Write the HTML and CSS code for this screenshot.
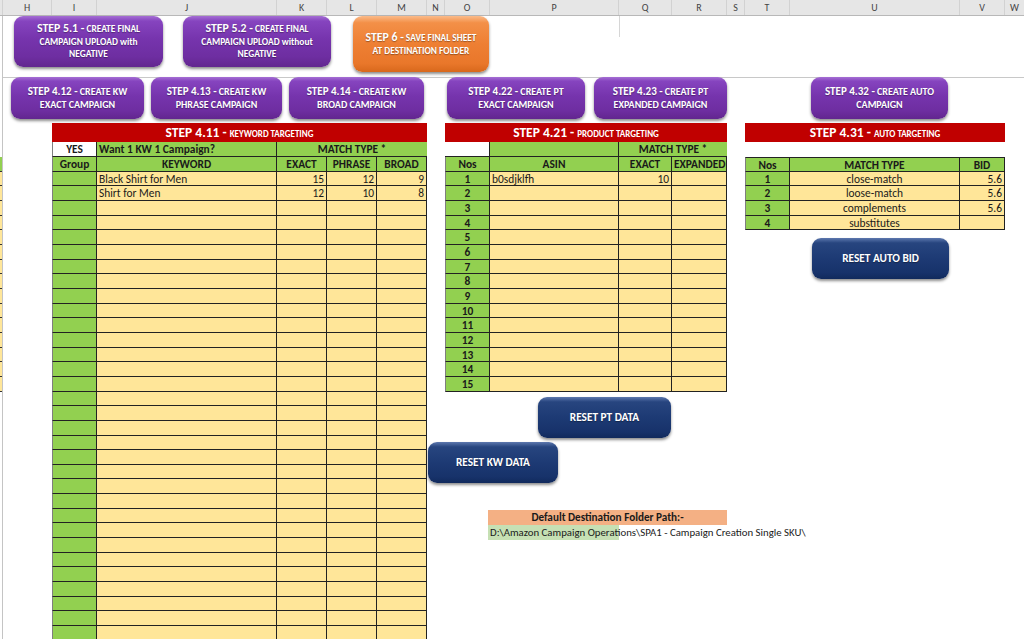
FILE: index.html
```html
<!DOCTYPE html>
<html>
<head>
<meta charset="utf-8">
<link rel="stylesheet" href="styles.css">
</head>
<body>
<div class="colhead">
  <div class="h cG"></div><div class="h cH">H</div><div class="h cI">I</div><div class="h cJ">J</div><div class="h cK">K</div><div class="h cL">L</div><div class="h cM">M</div><div class="h cN">N</div><div class="h cO">O</div><div class="h cP">P</div><div class="h cQ">Q</div><div class="h cR">R</div><div class="h cS">S</div><div class="h cT">T</div><div class="h cU">U</div><div class="h cV">V</div><div class="h cW">W</div>
</div>
<div class="sheet">
  <div class="gutter">
    <div class="gsp"></div>
    <div class="gc g"></div>
    <div class="gc y"></div><div class="gc y"></div><div class="gc y"></div><div class="gc y"></div><div class="gc y"></div>
    <div class="gc y"></div><div class="gc y"></div><div class="gc y"></div><div class="gc y"></div><div class="gc y"></div>
    <div class="gc y"></div><div class="gc y"></div><div class="gc y"></div><div class="gc y"></div><div class="gc y"></div>
  </div>
  <div class="main">
    <div class="row1">
      <div class="btn purple b51"><div><span class="big">STEP 5.1 -</span> CREATE FINAL<br>CAMPAIGN UPLOAD with<br>NEGATIVE</div></div>
      <div class="btn purple b52"><div><span class="big">STEP 5.2 -</span> CREATE FINAL<br>CAMPAIGN UPLOAD without<br>NEGATIVE</div></div>
      <div class="btn orange b6"><div><span class="big">STEP 6 -</span> SAVE FINAL SHEET<br>AT DESTINATION FOLDER</div></div>
      <div class="gridseg"></div>
    </div>
    <div class="pane-line"></div>
    <div class="row2">
      <div class="btn purple s b412"><div><span class="mid-big">STEP 4.12 -</span> CREATE KW<br>EXACT CAMPAIGN</div></div>
      <div class="btn purple s b413"><div><span class="mid-big">STEP 4.13 -</span> CREATE KW<br>PHRASE CAMPAIGN</div></div>
      <div class="btn purple s b414"><div><span class="mid-big">STEP 4.14 -</span> CREATE KW<br>BROAD CAMPAIGN</div></div>
      <div class="btn purple s b422"><div><span class="mid-big">STEP 4.22 -</span> CREATE PT<br>EXACT CAMPAIGN</div></div>
      <div class="btn purple s b423"><div><span class="mid-big">STEP 4.23 -</span> CREATE PT<br>EXPANDED CAMPAIGN</div></div>
      <div class="btn purple s b432"><div><span class="mid-big">STEP 4.32 -</span> CREATE AUTO<br>CAMPAIGN</div></div>
    </div>
    <div class="tables">
      <div class="tbl kw">
        <div class="title">STEP 4.11 - <small>KEYWORD TARGETING</small></div>
        <div class="c w b ctr first">YES</div><div class="c g b">Want 1 KW 1 Campaign?</div><div class="c g b ctr span3 nr">MATCH TYPE *</div>
        <div class="c g b ctr first">Group</div><div class="c g b ctr">KEYWORD</div><div class="c g b ctr">EXACT</div><div class="c g b ctr">PHRASE</div><div class="c g b ctr">BROAD</div>
        <div class="c g first"></div><div class="c y">Black Shirt for Men</div><div class="c y r">15</div><div class="c y r">12</div><div class="c y r">9</div>
        <div class="c g first"></div><div class="c y">Shirt for Men</div><div class="c y r">12</div><div class="c y r">10</div><div class="c y r">8</div>
        <div class="c g first"></div><div class="c y"></div><div class="c y"></div><div class="c y"></div><div class="c y"></div>
        <div class="c g first"></div><div class="c y"></div><div class="c y"></div><div class="c y"></div><div class="c y"></div>
        <div class="c g first"></div><div class="c y"></div><div class="c y"></div><div class="c y"></div><div class="c y"></div>
        <div class="c g first"></div><div class="c y"></div><div class="c y"></div><div class="c y"></div><div class="c y"></div>
        <div class="c g first"></div><div class="c y"></div><div class="c y"></div><div class="c y"></div><div class="c y"></div>
        <div class="c g first"></div><div class="c y"></div><div class="c y"></div><div class="c y"></div><div class="c y"></div>
        <div class="c g first"></div><div class="c y"></div><div class="c y"></div><div class="c y"></div><div class="c y"></div>
        <div class="c g first"></div><div class="c y"></div><div class="c y"></div><div class="c y"></div><div class="c y"></div>
        <div class="c g first"></div><div class="c y"></div><div class="c y"></div><div class="c y"></div><div class="c y"></div>
        <div class="c g first"></div><div class="c y"></div><div class="c y"></div><div class="c y"></div><div class="c y"></div>
        <div class="c g first"></div><div class="c y"></div><div class="c y"></div><div class="c y"></div><div class="c y"></div>
        <div class="c g first"></div><div class="c y"></div><div class="c y"></div><div class="c y"></div><div class="c y"></div>
        <div class="c g first"></div><div class="c y"></div><div class="c y"></div><div class="c y"></div><div class="c y"></div>
        <div class="c g first"></div><div class="c y"></div><div class="c y"></div><div class="c y"></div><div class="c y"></div>
        <div class="c g first"></div><div class="c y"></div><div class="c y"></div><div class="c y"></div><div class="c y"></div>
        <div class="c g first"></div><div class="c y"></div><div class="c y"></div><div class="c y"></div><div class="c y"></div>
        <div class="c g first"></div><div class="c y"></div><div class="c y"></div><div class="c y"></div><div class="c y"></div>
        <div class="c g first"></div><div class="c y"></div><div class="c y"></div><div class="c y"></div><div class="c y"></div>
        <div class="c g first"></div><div class="c y"></div><div class="c y"></div><div class="c y"></div><div class="c y"></div>
        <div class="c g first"></div><div class="c y"></div><div class="c y"></div><div class="c y"></div><div class="c y"></div>
        <div class="c g first"></div><div class="c y"></div><div class="c y"></div><div class="c y"></div><div class="c y"></div>
        <div class="c g first"></div><div class="c y"></div><div class="c y"></div><div class="c y"></div><div class="c y"></div>
        <div class="c g first"></div><div class="c y"></div><div class="c y"></div><div class="c y"></div><div class="c y"></div>
        <div class="c g first"></div><div class="c y"></div><div class="c y"></div><div class="c y"></div><div class="c y"></div>
        <div class="c g first"></div><div class="c y"></div><div class="c y"></div><div class="c y"></div><div class="c y"></div>
        <div class="c g first"></div><div class="c y"></div><div class="c y"></div><div class="c y"></div><div class="c y"></div>
        <div class="c g first"></div><div class="c y"></div><div class="c y"></div><div class="c y"></div><div class="c y"></div>
        <div class="c g first"></div><div class="c y"></div><div class="c y"></div><div class="c y"></div><div class="c y"></div>
        <div class="c g first"></div><div class="c y"></div><div class="c y"></div><div class="c y"></div><div class="c y"></div>
        <div class="c g first"></div><div class="c y"></div><div class="c y"></div><div class="c y"></div><div class="c y"></div>
        <div class="c g first"></div><div class="c y"></div><div class="c y"></div><div class="c y"></div><div class="c y"></div>
      </div>
      <div class="midcol">
        <div class="tbl pt">
          <div class="title">STEP 4.21 - <small>PRODUCT TARGETING</small></div>
          <div class="c blank"></div><div class="c g"></div><div class="c g b ctr span2 nr">MATCH TYPE *</div>
          <div class="c g b ctr first">Nos</div><div class="c g b ctr">ASIN</div><div class="c g b ctr">EXACT</div><div class="c g b ctr">EXPANDED</div>
          <div class="c g b ctr first">1</div><div class="c y">b0sdjklfh</div><div class="c y r">10</div><div class="c y"></div>
          <div class="c g b ctr first">2</div><div class="c y"></div><div class="c y"></div><div class="c y"></div>
          <div class="c g b ctr first">3</div><div class="c y"></div><div class="c y"></div><div class="c y"></div>
          <div class="c g b ctr first">4</div><div class="c y"></div><div class="c y"></div><div class="c y"></div>
          <div class="c g b ctr first">5</div><div class="c y"></div><div class="c y"></div><div class="c y"></div>
          <div class="c g b ctr first">6</div><div class="c y"></div><div class="c y"></div><div class="c y"></div>
          <div class="c g b ctr first">7</div><div class="c y"></div><div class="c y"></div><div class="c y"></div>
          <div class="c g b ctr first">8</div><div class="c y"></div><div class="c y"></div><div class="c y"></div>
          <div class="c g b ctr first">9</div><div class="c y"></div><div class="c y"></div><div class="c y"></div>
          <div class="c g b ctr first">10</div><div class="c y"></div><div class="c y"></div><div class="c y"></div>
          <div class="c g b ctr first">11</div><div class="c y"></div><div class="c y"></div><div class="c y"></div>
          <div class="c g b ctr first">12</div><div class="c y"></div><div class="c y"></div><div class="c y"></div>
          <div class="c g b ctr first">13</div><div class="c y"></div><div class="c y"></div><div class="c y"></div>
          <div class="c g b ctr first">14</div><div class="c y"></div><div class="c y"></div><div class="c y"></div>
          <div class="c g b ctr first">15</div><div class="c y"></div><div class="c y"></div><div class="c y"></div>
        </div>
        <div class="btn navy rpt">RESET PT DATA</div>
        <div class="btn navy rkw">RESET KW DATA</div>
        <div class="pathhead">Default Destination Folder Path:-</div>
        <div class="pathval">D:\Amazon Campaign Operations\SPA1 - Campaign Creation Single SKU\</div>
      </div>
      <div class="rightcol">
        <div class="tbl auto">
          <div class="title">STEP 4.31 - <small>AUTO TARGETING</small></div>
          <div class="blankrow"></div>
          <div class="c g b ctr first top">Nos</div><div class="c g b ctr top">MATCH TYPE</div><div class="c g b ctr top">BID</div>
          <div class="c g b ctr first">1</div><div class="c y ctr">close-match</div><div class="c y r">5.6</div>
          <div class="c g b ctr first">2</div><div class="c y ctr">loose-match</div><div class="c y r">5.6</div>
          <div class="c g b ctr first">3</div><div class="c y ctr">complements</div><div class="c y r">5.6</div>
          <div class="c g b ctr first">4</div><div class="c y ctr">substitutes</div><div class="c y r"></div>
        </div>
        <div class="btn navy rauto">RESET AUTO BID</div>
      </div>
    </div>
  </div>
</div>
</body>
</html>
```

FILE: styles.css
```css
* { box-sizing: border-box; }
html, body { margin: 0; padding: 0; }
body {
  width: 1024px;
  height: 639px;
  overflow: hidden;
  background: #ffffff;
  font-family: Carlito, Lato, "Open Sans", sans-serif;
  color: #1a1a1a;
}

/* column header */
.colhead {
  display: flex;
  height: 16px;
  background: #e6e6e6;
  border-bottom: 1px solid #b8b8b8;
}
.colhead .h {
  flex: none;
  height: 15px;
  border-right: 1px solid #d2d2d2;
  font-size: 10px;
  line-height: 15px;
  color: #444444;
  text-align: center;
}
.cG { width: 3px; }
.cH { width: 49px; }
.cI { width: 45px; }
.cJ { width: 180px; }
.cK { width: 50px; }
.cL { width: 50px; }
.cM { width: 50px; }
.cN { width: 18px; }
.cO { width: 45px; }
.cP { width: 129px; }
.cQ { width: 53px; }
.cR { width: 55px; }
.cS { width: 18px; }
.cT { width: 45px; }
.cU { width: 170px; }
.cV { width: 45px; }
.cW { width: 19px; border-right: none !important; }

.sheet {
  display: flex;
  height: 623px;
}

/* cut-off column G at the far left */
.gutter {
  flex: none;
  width: 3px;
  border-right: 1px solid #c4c4c4;
  display: flex;
  flex-direction: column;
}
.gsp { height: 140.7px; flex: none; }
.gc {
  flex: none;
  height: 14.667px;
  border-bottom: 1px solid #333;
}
.gutter .gc.g { height: 15px; }

.main {
  flex: 1;
  display: flex;
  flex-direction: column;
  min-width: 0;
}

/* buttons */
.btn {
  flex: none;
  display: flex;
  align-items: center;
  justify-content: center;
  text-align: center;
  color: #ffffff;
  font-weight: 700;
  font-size: 9.4px;
  line-height: 12.5px;
  border-radius: 9px;
  box-shadow: 0 2px 3px rgba(0, 0, 0, 0.45);
  text-shadow: 0 1px 1px rgba(0, 0, 0, 0.35);
  white-space: nowrap;
}
.btn .big { font-size: 11.8px; }
.btn .mid-big { font-size: 11px; }
.btn.s { font-size: 10px; line-height: 13px; }
.purple {
  background: linear-gradient(to bottom, #a56fd4 0%, #8644bf 10%, #7634ad 45%, #6e2ea1 80%, #62268f 100%);
}
.orange {
  background: linear-gradient(to bottom, #fbbb8a 0%, #f39048 12%, #ee7f33 50%, #e9772a 85%, #d8681c 100%);
}
.navy {
  background: linear-gradient(to bottom, #5d78ae 0%, #27457f 12%, #1d3a74 50%, #17326a 85%, #112a5c 100%);
  font-size: 11.3px;
  height: 41px;
}

.row1 {
  flex: none;
  height: 61px;
  display: flex;
  align-items: flex-start;
  padding-left: 11px;
}
.b51 { width: 149px; height: 51px; }
.b52 { width: 148px; height: 51px; margin-left: 20px; }
.b6 { width: 136px; height: 56px; margin-left: 22px; }
.gridseg {
  flex: none;
  width: 1px;
  height: 21px;
  margin-left: 130px;
  background: #d6d6d6;
}

.pane-line {
  flex: none;
  height: 1px;
  background: #c8c8c8;
}

.row2 {
  flex: none;
  height: 45px;
  display: flex;
  align-items: flex-start;
  padding-left: 8px;
}
.row2 .btn { height: 42px; margin-top: -1px; }
.b412 { width: 133px; }
.b413 { width: 131px; margin-left: 7px; }
.b414 { width: 135px; margin-left: 7px; }
.b422 { width: 138px; margin-left: 23px; }
.b423 { width: 133px; margin-left: 9px; }
.b432 { width: 137px; margin-left: 84px; }

/* tables */
.tables {
  flex: none;
  display: flex;
  align-items: flex-start;
  padding-left: 49px;
}
.tbl {
  display: grid;
  grid-template-rows: 18.7px 15px 15px;
  grid-auto-rows: 14.667px;
}
.kw { width: 375px; grid-template-columns: 45px 180px 50px 50px 50px; flex: none; }
.pt { width: 282px; grid-template-columns: 45px 129px 53px 55px; margin-left: 18px; }
.auto { width: 260px; grid-template-columns: 45px 170px 45px; }

.title {
  grid-column: 1 / -1;
  background: #c00000;
  color: #ffffff;
  font-weight: 700;
  font-size: 13.5px;
  line-height: 19px;
  text-align: center;
  white-space: nowrap;
}
.title small { font-size: 9px; }

.c {
  border-right: 1px solid #222222;
  border-bottom: 1px solid #222222;
  font-size: 11.4px;
  line-height: 15px;
  padding: 0 2px;
  white-space: nowrap;
  overflow: hidden;
  color: #1a1a1a;
}
.g { background: #92d050; }
.y { background: #ffe699; }
.w { background: #ffffff; }
.b { font-weight: 700; }
.ctr { text-align: center; }
.r { text-align: right; }
.first { border-left: 1px solid #7f7f7f; }
.nr { border-right: none; }
.top { border-top: 1px solid #222222; line-height: 14px; }
.span3 { grid-column: span 3; }
.span2 { grid-column: span 2; }
.blank { background: #ffffff; }
.blankrow { grid-column: 1 / -1; }

.midcol {
  flex: none;
  width: 300px;
  display: flex;
  flex-direction: column;
  align-items: flex-start;
}
.rpt { width: 133px; margin-left: 111px; margin-top: 5.3px; }
.rkw { width: 130px; margin-left: 1px; margin-top: 4px; }

.pathhead {
  margin-left: 61px;
  margin-top: 27px;
  width: 239px;
  height: 15px;
  background: #f4b084;
  font-weight: 700;
  font-size: 11.2px;
  line-height: 15px;
  text-align: center;
  color: #1a1a1a;
}
.pathval {
  margin-left: 61px;
  width: 131px;
  height: 15px;
  background: #c6e0b4;
  font-size: 10.8px;
  line-height: 15px;
  padding-left: 2px;
  white-space: nowrap;
  overflow: visible;
  color: #1a1a1a;
}

.rightcol {
  flex: none;
  width: 260px;
  margin-left: 18px;
  display: flex;
  flex-direction: column;
  align-items: flex-start;
}
.rauto { width: 137px; margin-left: 67px; margin-top: 7.6px; }
```
